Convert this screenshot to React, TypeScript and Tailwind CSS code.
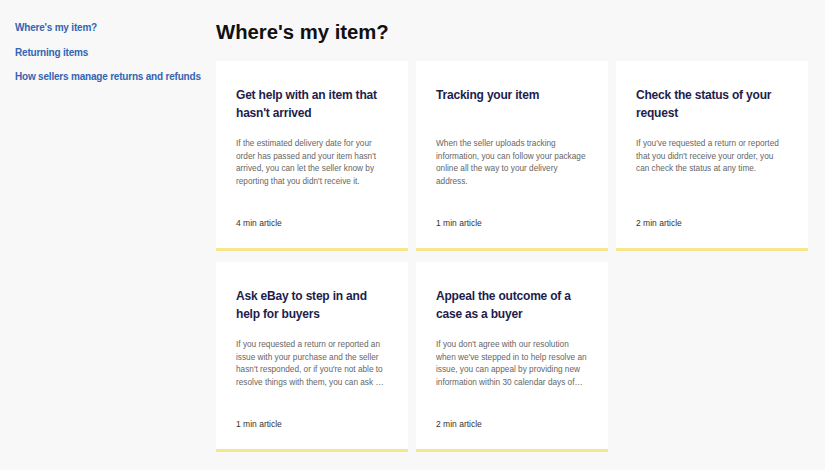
type Article = {
  title: string;
  description: string;
  minutes: number;
}

const articles: Article[] = [
  {
    title: "Get help with an item that hasn't arrived",
    description: "If the estimated delivery date for your order has passed and your item hasn't arrived, you can let the seller know by reporting that you didn't receive it.",
    minutes: 4,
  },
  {
    title: "Tracking your item",
    description: "When the seller uploads tracking information, you can follow your package online all the way to your delivery address.",
    minutes: 1,
  },
  {
    title: "Check the status of your request",
    description: "If you've requested a return or reported that you didn't receive your order, you can check the status at any time.",
    minutes: 2,
  },
  {
    title: "Ask eBay to step in and help for buyers",
    description: "If you requested a return or reported an issue with your purchase and the seller hasn't responded, or if you're not able to resolve things with them, you can ask us to step in and help.",
    minutes: 1,
  },
  {
    title: "Appeal the outcome of a case as a buyer",
    description: "If you don't agree with our resolution when we've stepped in to help resolve an issue, you can appeal by providing new information within 30 calendar days of the case closing.",
    minutes: 2,
  },
];

const links = ["Where's my item?", "Returning items", "How sellers manage returns and refunds"];

const ArticleCard = ({ article }: { article: Article }) => (
  <div className="flex flex-col h-[190px] bg-white border-b-[3px] border-[#f6e68e] px-5 pt-[25px] pb-[19px]">
    <h3 className="text-[12px] leading-[18px] font-bold tracking-[-0.2px] text-[#1e1d4c] min-h-[36px] pr-2">{article.title}</h3>
    <p className="mt-[16px] text-[8.25px] leading-[12.5px] text-[#666] line-clamp-4">{article.description}</p>
    <span className="mt-auto text-[8.5px] leading-[12px] text-[#333]">{article.minutes} min article</span>
  </div>
);

const App = () => {
  return (
    <div className="flex min-h-[470px] bg-[#f8f8f9] font-['Liberation_Sans',Arial,sans-serif]">
      <nav className="w-[216px] shrink-0 pl-[15px] pt-[21px] flex flex-col gap-[10.5px]">
        {links.map((link) => (
          <a key={link} href="#" className="text-[10px] leading-[14px] font-bold tracking-[-0.2px] text-[#3464b0] whitespace-nowrap">{link}</a>
        ))}
      </nav>

      <main className="w-[592px] pt-[19px]">
        <h1 className="text-[20.3px] leading-[26px] font-bold text-[#111] mb-[16px]">Where's my item?</h1>
        <div className="grid grid-cols-3 gap-x-2 gap-y-[11px]">
          {articles.map((article) => (
            <ArticleCard key={article.title} article={article} />
          ))}
        </div>
      </main>
    </div>
  );
}

export default App;
